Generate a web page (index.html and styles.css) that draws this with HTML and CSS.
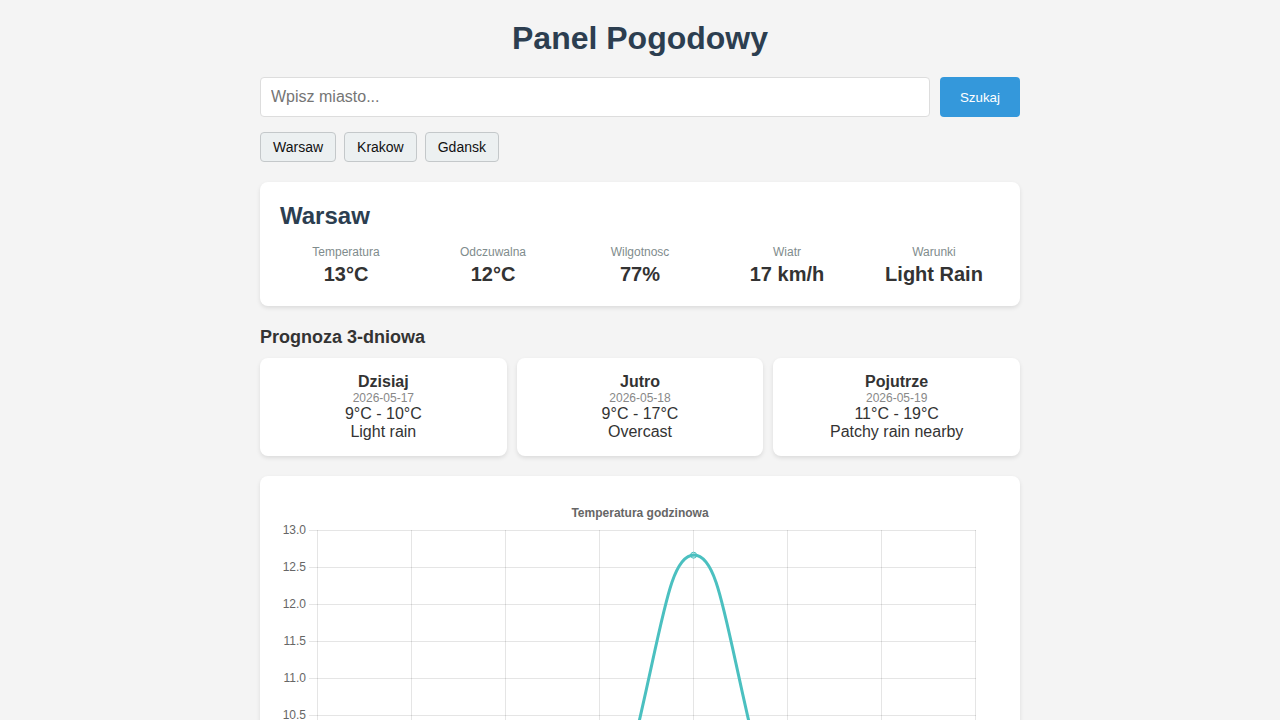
FILE: index.html
```html
<!DOCTYPE html>
<html lang="pl">
<head>
    <meta charset="UTF-8">
    <meta name="viewport" content="width=device-width, initial-scale=1.0">
    <title>Panel Pogodowy</title>
    <link rel="stylesheet" href="styles.css">
</head>
<body>
    <div class="container">
        <h1>Panel Pogodowy</h1>

        <div class="search-row">
            <input type="text" id="cityInput" placeholder="Wpisz miasto...">
            <button class="search-button">Szukaj</button>
        </div>

        <div class="quick-cities">
            <button class="city-button">Warsaw</button>
            <button class="city-button">Krakow</button>
            <button class="city-button">Gdansk</button>
        </div>

        <div class="card current-weather">
            <h2>Warsaw</h2>
            <div class="weather-grid">
                <div class="weather-item">
                    <div class="label">Temperatura</div>
                    <div class="value">13°C</div>
                </div>
                <div class="weather-item">
                    <div class="label">Odczuwalna</div>
                    <div class="value">12°C</div>
                </div>
                <div class="weather-item">
                    <div class="label">Wilgotnosc</div>
                    <div class="value">77%</div>
                </div>
                <div class="weather-item">
                    <div class="label">Wiatr</div>
                    <div class="value">17 km/h</div>
                </div>
                <div class="weather-item">
                    <div class="label">Warunki</div>
                    <div class="value">Light Rain</div>
                </div>
            </div>
        </div>

        <h3>Prognoza 3-dniowa</h3>
        <div class="forecast-grid">
            <div class="card forecast-card">
                <div class="day">Dzisiaj</div>
                <div class="date">2026-05-17</div>
                <div class="temps">9°C - 10°C</div>
                <div class="desc">Light rain</div>
            </div>
            <div class="card forecast-card">
                <div class="day">Jutro</div>
                <div class="date">2026-05-18</div>
                <div class="temps">9°C - 17°C</div>
                <div class="desc">Overcast</div>
            </div>
            <div class="card forecast-card">
                <div class="day">Pojutrze</div>
                <div class="date">2026-05-19</div>
                <div class="temps">11°C - 19°C</div>
                <div class="desc">Patchy rain nearby</div>
            </div>
        </div>

        <div class="card chart-card">
            <svg class="chart" width="720" height="440" viewBox="0 0 720 440">
                <text class="chart-title" x="360" y="21">Temperatura godzinowa</text>

                <!-- horizontal grid + y ticks -->
                <g class="grid">
                    <line x1="29" y1="34.5" x2="696" y2="34.5"/>
                    <line x1="29" y1="71.5" x2="696" y2="71.5"/>
                    <line x1="29" y1="108.5" x2="696" y2="108.5"/>
                    <line x1="29" y1="145.5" x2="696" y2="145.5"/>
                    <line x1="29" y1="182.5" x2="696" y2="182.5"/>
                    <line x1="29" y1="219.5" x2="696" y2="219.5"/>
                    <line x1="29" y1="256.5" x2="696" y2="256.5"/>
                    <line x1="29" y1="293.5" x2="696" y2="293.5"/>
                    <line x1="29" y1="330.5" x2="696" y2="330.5"/>
                    <line x1="29" y1="367.5" x2="696" y2="367.5"/>
                    <line x1="29" y1="404.5" x2="696" y2="404.5"/>
                </g>
                <g class="grid">
                    <line x1="37.5" y1="34" x2="37.5" y2="412"/>
                    <line x1="131.5" y1="34" x2="131.5" y2="412"/>
                    <line x1="225.5" y1="34" x2="225.5" y2="412"/>
                    <line x1="319.5" y1="34" x2="319.5" y2="412"/>
                    <line x1="413.5" y1="34" x2="413.5" y2="412"/>
                    <line x1="507.5" y1="34" x2="507.5" y2="412"/>
                    <line x1="601.5" y1="34" x2="601.5" y2="412"/>
                    <line x1="695.5" y1="34" x2="695.5" y2="412"/>
                </g>

                <g class="ticks y-ticks">
                    <text x="26" y="38">13.0</text>
                    <text x="26" y="75">12.5</text>
                    <text x="26" y="112">12.0</text>
                    <text x="26" y="149">11.5</text>
                    <text x="26" y="186">11.0</text>
                    <text x="26" y="223">10.5</text>
                    <text x="26" y="260">10.0</text>
                    <text x="26" y="297">9.5</text>
                    <text x="26" y="334">9.0</text>
                    <text x="26" y="371">8.5</text>
                    <text x="26" y="408">8.0</text>
                </g>
                <g class="ticks x-ticks">
                    <text x="37.5" y="428">00:00</text>
                    <text x="131.5" y="428">03:00</text>
                    <text x="225.5" y="428">06:00</text>
                    <text x="319.5" y="428">09:00</text>
                    <text x="413.5" y="428">12:00</text>
                    <text x="507.5" y="428">15:00</text>
                    <text x="601.5" y="428">18:00</text>
                    <text x="695.5" y="428">21:00</text>
                </g>

                <path class="line" d="M37.5,300 C75,305 100,318 131.5,325 C165,333 190,370 225.5,372 C260,374 300,395 319.5,398 C327,370 333,330 340,304 C382,144 386,59 414,59 C442,59 446,144 488,304 C495,330 501,370 507.5,398 C540,395 570,380 601.5,372 C640,364 670,345 695.5,337"/>
                <circle class="point" cx="37.5" cy="300" r="3"/>
                <circle class="point" cx="131.5" cy="325" r="3"/>
                <circle class="point" cx="225.5" cy="372" r="3"/>
                <circle class="point" cx="319.5" cy="398" r="3"/>
                <circle class="point" cx="413.6" cy="59.2" r="3"/>
                <circle class="point" cx="507.5" cy="398" r="3"/>
                <circle class="point" cx="601.5" cy="372" r="3"/>
                <circle class="point" cx="695.5" cy="337" r="3"/>
            </svg>
        </div>
    </div>
</body>
</html>
```

FILE: styles.css
```css
body {
    font-family: "Liberation Sans", Arial, sans-serif;
    margin: 0;
    padding: 20px;
    background-color: #f4f4f4;
    color: #333;
}
.container {
    max-width: 760px;
    margin: 0 auto;
}
h1 {
    text-align: center;
    color: #2c3e50;
    font-size: 32px;
    margin: 0 0 20px;
}
.search-row {
    display: flex;
    gap: 10px;
    margin-bottom: 15px;
}
.search-row input {
    flex: 1;
    padding: 10px;
    font-size: 16px;
    font-family: inherit;
    border: 1px solid #ddd;
    border-radius: 4px;
    outline: none;
}
.search-row input::placeholder {
    color: #757575;
}
.search-button {
    padding: 10px 20px;
    font-family: inherit;
    font-size: 13.33px;
    border: none;
    border-radius: 4px;
    background-color: #3498db;
    color: white;
    cursor: pointer;
}
.quick-cities {
    display: flex;
    gap: 8px;
    margin-bottom: 20px;
}
.city-button {
    padding: 6px 12px;
    font-family: inherit;
    font-size: 14px;
    color: #111;
    background-color: #ecf0f1;
    border: 1px solid #c4c8ca;
    border-radius: 4px;
    cursor: pointer;
}
.card {
    background-color: #fff;
    border-radius: 8px;
    padding: 20px;
    box-shadow: 0 2px 4px rgba(0,0,0,0.1);
    margin-bottom: 20px;
}
.current-weather h2 {
    margin: 0 0 15px;
    font-size: 24px;
    color: #2c3e50;
}
.weather-grid {
    display: grid;
    grid-template-columns: repeat(5, 1fr);
    gap: 15px;
    text-align: center;
}
.label {
    font-size: 12px;
    color: #7f8c8d;
    margin-bottom: 4px;
}
.value {
    font-size: 20px;
    font-weight: bold;
}
h3 {
    font-size: 18px;
    margin: 21px 0 10px;
}
.forecast-grid {
    display: grid;
    grid-template-columns: repeat(3, 1fr);
    gap: 10px;
    margin-bottom: 20px;
}
.forecast-card {
    padding: 15px;
    margin-bottom: 0;
    text-align: center;
}
.day {
    font-size: 16px;
    font-weight: bold;
}
.date {
    font-size: 12px;
    color: #888;
}
.temps, .desc {
    font-size: 16px;
}
.chart {
    display: block;
}
.chart-title {
    font-size: 12px;
    font-weight: bold;
    fill: #666;
    text-anchor: middle;
}
.grid line {
    stroke: rgba(0,0,0,0.1);
    stroke-width: 1;
}
.ticks text {
    font-size: 12px;
    fill: #666;
}
.y-ticks text {
    text-anchor: end;
}
.x-ticks text {
    text-anchor: middle;
}
.line {
    fill: none;
    stroke: #4bc0c0;
    stroke-width: 3;
}
.point {
    fill: rgba(75,192,192,0.2);
    stroke: #4bc0c0;
    stroke-width: 1;
}
```
